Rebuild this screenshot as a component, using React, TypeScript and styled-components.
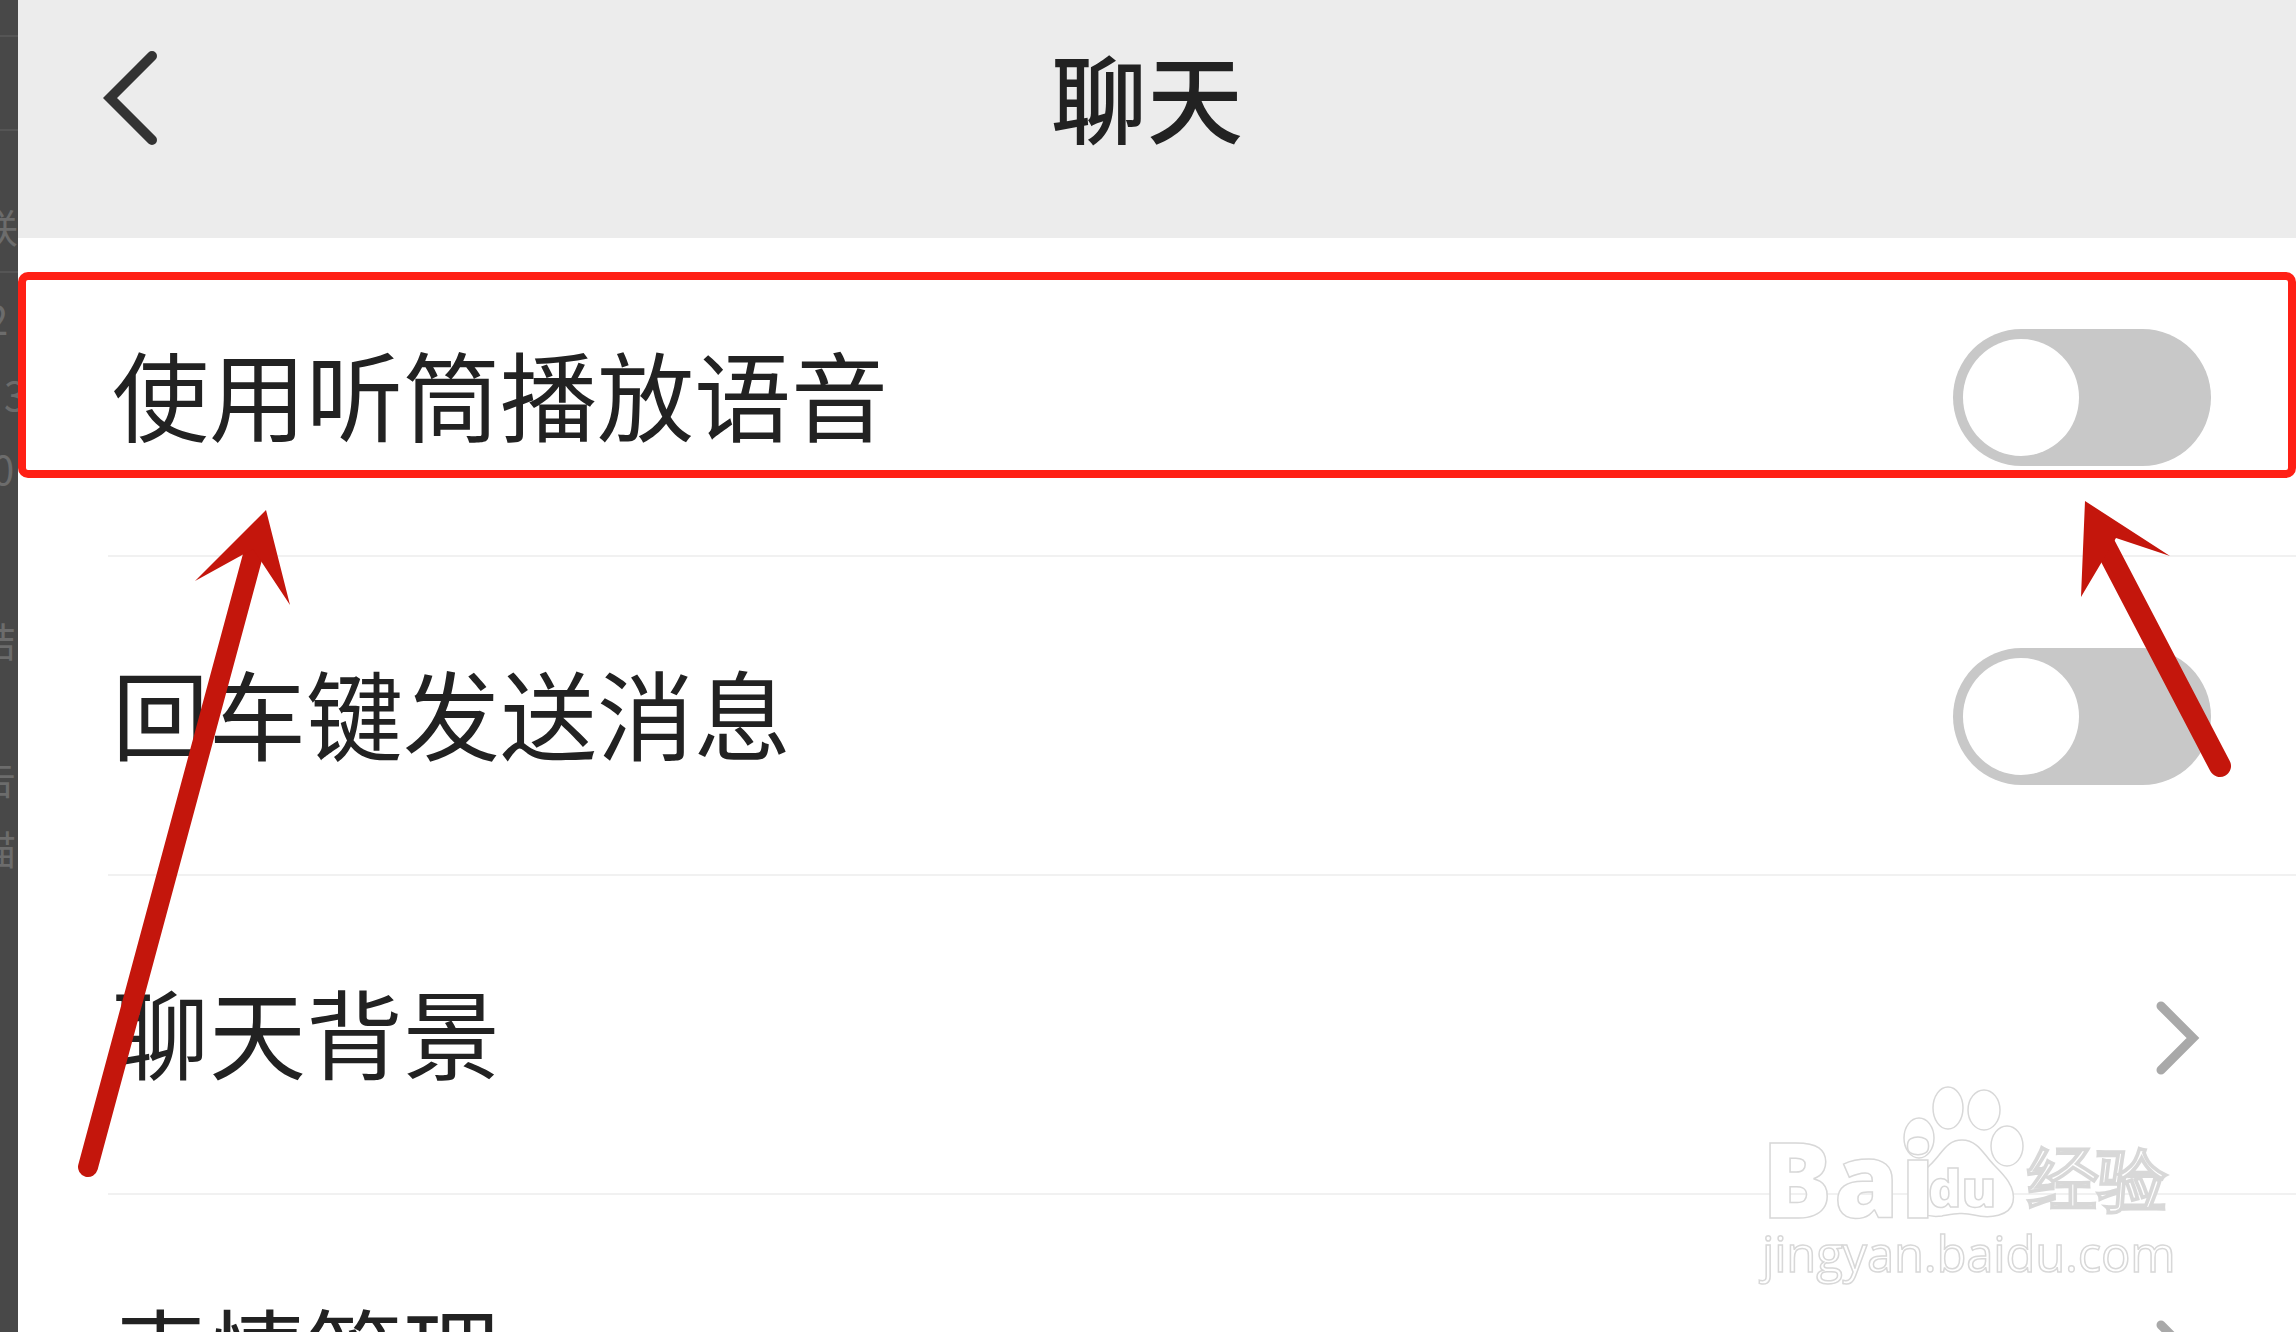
import styled, { createGlobalStyle } from 'styled-components'

const GlobalStyle = createGlobalStyle`
    html, body {
        margin: 0;
        padding: 0;
        background: #fff;
    }
    * {
        box-sizing: border-box;
    }
`

const Page = styled.div`
    position: relative;
    width: 2296px;
    height: 1332px;
    overflow: hidden;
    display: flex;
    background: #fff;
    font-family: "Noto Sans CJK SC", "Liberation Sans", sans-serif;
`

const SideStrip = styled.aside`
    flex: 0 0 18px;
    height: 100%;
    overflow: hidden;
    background: #484848;
    display: flex;
    flex-direction: column;
    color: #6c6c6c;
    font-size: 40px;
    line-height: 50px;
`

const StripRule = styled.div<{ $gap: number }>`
    flex: none;
    margin-top: ${p => p.$gap}px;
    height: 2px;
    background: #555;
`

const StripGlyph = styled.div<{ $gap: number; $shift: number }>`
    flex: none;
    margin-top: ${p => p.$gap}px;
    margin-left: ${p => p.$shift}px;
    white-space: nowrap;
`

const Screen = styled.main`
    flex: 1;
    min-width: 0;
    display: flex;
    flex-direction: column;
`

const Header = styled.header`
    flex: 0 0 238px;
    background: #ececec;
    display: flex;
    align-items: flex-start;
    justify-content: center;
    position: relative;
`

const BackIcon = styled.svg`
    position: absolute;
    left: 85px;
    top: 46px;
    width: 60px;
    height: 104px;
`

const Title = styled.h1`
    margin: 30px 0 0;
    font-size: 96px;
    line-height: 130px;
    font-weight: 500;
    color: #222;
    transform: translateX(-10px);
`

const Row = styled.div`
    flex: 0 0 319px;
    margin-left: 90px;
    padding: 0 85px 10px 4px;
    border-bottom: 2px solid #f1f1f1;
    display: flex;
    align-items: center;
    justify-content: space-between;
`

const RowLabel = styled.span`
    font-size: 97px;
    line-height: 130px;
    color: #222;
    font-weight: 400;
    white-space: nowrap;
`

const Track = styled.div`
    width: 258px;
    height: 137px;
    padding: 10px;
    border-radius: 69px;
    background: #c8c8c8;
    margin-top: 12px;
`

const Knob = styled.div`
    width: 116px;
    height: 117px;
    border-radius: 50%;
    background: #fff;
`

const Chevron = styled.svg`
    width: 46px;
    height: 76px;
    margin-right: 10px;
    margin-top: 16px;
`

const Highlight = styled.div`
    position: absolute;
    left: 18px;
    top: 272px;
    width: 2278px;
    height: 206px;
    border: 8px solid #ff2015;
    border-radius: 10px;
`

const Arrows = styled.svg`
    position: absolute;
    left: 0;
    top: 0;
    width: 2296px;
    height: 1332px;
`

const Watermark = styled.div`
    position: absolute;
    left: 1760px;
    top: 1080px;
    width: 420px;
    height: 232px;
    color: #fff;
    -webkit-text-stroke: 1.5px #d8d8d8;
    font-family: "Open Sans", "Liberation Sans", sans-serif;
`

const PawIcon = styled.svg`
    position: absolute;
    left: 0;
    top: 0;
    width: 420px;
    height: 170px;
`

const MarkWord = styled.span<{ $x: number; $y: number; $size: number; $track?: number }>`
    position: absolute;
    left: ${p => p.$x}px;
    top: ${p => p.$y}px;
    font-size: ${p => p.$size}px;
    letter-spacing: ${p => p.$track ?? 0}px;
    line-height: 1;
    font-weight: 800;
    white-space: nowrap;
`

const MarkUrl = styled.div`
    position: absolute;
    left: 2px;
    top: 141px;
    font-size: 49px;
    line-height: 64px;
    font-weight: 400;
    white-space: nowrap;
    letter-spacing: -0.2px;
`

function Toggle() {
    return <Track><Knob /></Track>
}

function RowChevron() {
    return (
        <Chevron viewBox="0 0 46 76">
            <path d="M6 6 L38 38 L6 70" fill="none" stroke="#a9a9a9" strokeWidth="9" strokeLinecap="round" strokeLinejoin="miter" />
        </Chevron>
    )
}

export default function App() {
    return (
        <>
            <GlobalStyle />
            <Page>
                <SideStrip>
                    <StripRule $gap={35} />
                    <StripRule $gap={92} />
                    <StripGlyph $gap={70} $shift={-22}>联</StripGlyph>
                    <StripRule $gap={20} />
                    <StripGlyph $gap={20} $shift={-14}>2</StripGlyph>
                    <StripGlyph $gap={26} $shift={4}>3</StripGlyph>
                    <StripGlyph $gap={24} $shift={-8}>0</StripGlyph>
                    <StripGlyph $gap={122} $shift={-24}>结</StripGlyph>
                    <StripGlyph $gap={87} $shift={-24}>告</StripGlyph>
                    <StripGlyph $gap={21} $shift={-24}>描</StripGlyph>
                </SideStrip>
                <Screen>
                    <Header>
                        <BackIcon viewBox="0 0 60 104">
                            <path d="M49 10 L7 52 L49 94" fill="none" stroke="#333" strokeWidth="10" strokeLinecap="round" strokeLinejoin="miter" />
                        </BackIcon>
                        <Title>聊天</Title>
                    </Header>
                    <Row>
                        <RowLabel>使用听筒播放语音</RowLabel>
                        <Toggle />
                    </Row>
                    <Row>
                        <RowLabel>回车键发送消息</RowLabel>
                        <Toggle />
                    </Row>
                    <Row>
                        <RowLabel>聊天背景</RowLabel>
                        <RowChevron />
                    </Row>
                    <Row>
                        <RowLabel>表情管理</RowLabel>
                        <RowChevron />
                    </Row>
                </Screen>

                <Watermark>
                    <PawIcon viewBox="0 0 420 170">
                        <g fill="#fff" stroke="#d8d8d8" strokeWidth="1.5">
                            <ellipse cx="159" cy="58" rx="15" ry="20" />
                            <ellipse cx="188" cy="28" rx="15" ry="21" />
                            <ellipse cx="224" cy="30" rx="16" ry="20" />
                            <ellipse cx="247" cy="66" rx="16" ry="20" />
                            <path d="M202 60 C186 60 182 74 170 85 C158 97 150 107 152 120 C154 133 168 138 182 136 C194 134 202 132 214 135 C230 139 250 136 253 122 C256 107 244 95 234 85 C224 75 218 60 202 60 Z" />
                        </g>
                    </PawIcon>
                    <MarkWord $x={2} $y={46} $size={104} $track={2}>Bai</MarkWord>
                    <MarkWord $x={168} $y={81} $size={52}>du</MarkWord>
                    <MarkWord $x={268} $y={62} $size={70}>经验</MarkWord>
                    <MarkUrl>jingyan.baidu.com</MarkUrl>
                </Watermark>

                <Highlight />

                <Arrows viewBox="0 0 2296 1332">
                    <path d="M88 1167 L253 555" fill="none" stroke="#c4160c" strokeWidth="20" strokeLinecap="round" />
                    <path d="M266 510 L290 605 L253 549 L195 581 Z" fill="#c4160c" />
                    <path d="M2220 766 L2102 540" fill="none" stroke="#c4160c" strokeWidth="22" strokeLinecap="round" />
                    <path d="M2085 501 L2170 556 L2116 538 L2081 597 Z" fill="#c4160c" />
                </Arrows>
            </Page>
        </>
    )
}
